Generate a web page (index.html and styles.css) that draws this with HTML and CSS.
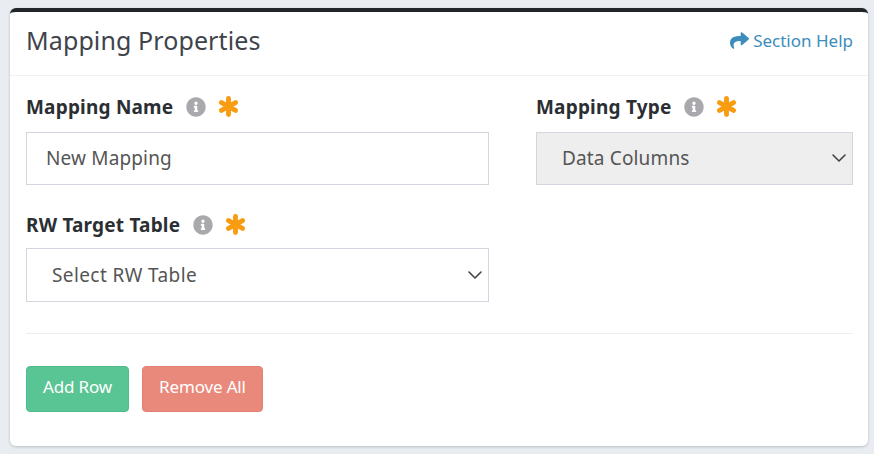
FILE: index.html
```html
<!DOCTYPE html>
<html lang="en">
<head>
<meta charset="utf-8">
<title>Mapping Properties</title>
<link rel="stylesheet" href="styles.css">
</head>
<body>
<section class="card">
  <header class="card-header">
    <h2 class="card-title">Mapping Properties</h2>
    <a class="help-link" href="#">
      <svg class="share-icon" viewBox="0 0 512 512"><path fill="currentColor" d="M503.7 189.8 327.7 37.9C312.3 24.5 288 35.3 288 56v80.100C127.400 137.900 0 170.100 0 322.300c0 61.400 39.600 122.300 83.300 154.100 13.700 9.900 33.100-2.500 28.100-18.600C66.100 312.800 132.900 274.300 288 272.100V360c0 20.700 24.300 31.500 39.700 18.200l176-152c11.100-9.600 11.100-26.800 0-36.400z"/></svg>
      <span>Section Help</span>
    </a>
  </header>
  <div class="card-body">
    <div class="form-grid">
      <div class="field">
        <div class="field-label">
          <span class="label-text">Mapping Name</span>
          <svg class="info-icon" viewBox="0 0 512 512"><path fill="currentColor" d="M256 8C119 8 8 119 8 256s111 248 248 248 248-111 248-248S393 8 256 8zm0 110c23.200 0 42 18.800 42 42s-18.800 42-42 42-42-18.800-42-42 18.800-42 42-42zm56 254c0 6.600-5.400 12-12 12h-88c-6.600 0-12-5.400-12-12v-24c0-6.600 5.400-12 12-12h12v-64h-12c-6.600 0-12-5.400-12-12v-24c0-6.600 5.400-12 12-12h64c6.600 0 12 5.400 12 12v100h12c6.600 0 12 5.400 12 12v24z"/></svg>
          <svg class="req-icon" viewBox="0 0 18 18"><path fill="none" stroke="currentColor" stroke-width="4.2" stroke-linecap="round" d="M9 2.200v13.600M3 5.600l12 6.800M15 5.600L3 12.400"/></svg>
        </div>
        <input class="control text-control" type="text" value="New Mapping">
      </div>
      <div class="field">
        <div class="field-label">
          <span class="label-text">Mapping Type</span>
          <svg class="info-icon" viewBox="0 0 512 512"><path fill="currentColor" d="M256 8C119 8 8 119 8 256s111 248 248 248 248-111 248-248S393 8 256 8zm0 110c23.200 0 42 18.800 42 42s-18.800 42-42 42-42-18.800-42-42 18.800-42 42-42zm56 254c0 6.600-5.400 12-12 12h-88c-6.600 0-12-5.400-12-12v-24c0-6.600 5.400-12 12-12h12v-64h-12c-6.600 0-12-5.400-12-12v-24c0-6.600 5.400-12 12-12h64c6.600 0 12 5.400 12 12v100h12c6.600 0 12 5.400 12 12v24z"/></svg>
          <svg class="req-icon" viewBox="0 0 18 18"><path fill="none" stroke="currentColor" stroke-width="4.2" stroke-linecap="round" d="M9 2.200v13.600M3 5.600l12 6.800M15 5.600L3 12.400"/></svg>
        </div>
        <div class="control select-control is-disabled">
          <span>Data Columns</span>
          <svg class="chevron" viewBox="0 0 16 16"><path fill="none" stroke="currentColor" stroke-width="1.6" stroke-linecap="round" stroke-linejoin="round" d="M2 5l6 6 6-6"/></svg>
        </div>
      </div>
      <div class="field">
        <div class="field-label tight">
          <span class="label-text">RW Target Table</span>
          <svg class="info-icon" viewBox="0 0 512 512"><path fill="currentColor" d="M256 8C119 8 8 119 8 256s111 248 248 248 248-111 248-248S393 8 256 8zm0 110c23.200 0 42 18.800 42 42s-18.800 42-42 42-42-18.800-42-42 18.800-42 42-42zm56 254c0 6.600-5.400 12-12 12h-88c-6.600 0-12-5.400-12-12v-24c0-6.600 5.400-12 12-12h12v-64h-12c-6.600 0-12-5.400-12-12v-24c0-6.600 5.400-12 12-12h64c6.600 0 12 5.400 12 12v100h12c6.600 0 12 5.400 12 12v24z"/></svg>
          <svg class="req-icon" viewBox="0 0 18 18"><path fill="none" stroke="currentColor" stroke-width="4.2" stroke-linecap="round" d="M9 2.200v13.600M3 5.600l12 6.800M15 5.600L3 12.400"/></svg>
        </div>
        <div class="control select-control tall">
          <span>Select RW Table</span>
          <svg class="chevron" viewBox="0 0 16 16"><path fill="none" stroke="currentColor" stroke-width="1.6" stroke-linecap="round" stroke-linejoin="round" d="M2 5l6 6 6-6"/></svg>
        </div>
      </div>
    </div>
    <hr class="divider">
    <div class="actions">
      <button class="btn btn-add" type="button">Add Row</button>
      <button class="btn btn-remove" type="button">Remove All</button>
    </div>
  </div>
</section>
</body>
</html>
```
FILE: styles.css
```css
* { box-sizing: border-box; }
html, body { height: 100%; }
body {
  margin: 0;
  padding: 8px 6px 8px 10px;
  background: #e9ecf1;
  font-family: "Noto Sans", "Open Sans", sans-serif;
  color: #444;
  overflow: hidden;
}
.card {
  height: 438px;
  background: #fff;
  border-top: 4px solid #212529;
  border-radius: 6px;
  box-shadow: 0 1px 3px rgba(0, 0, 0, .2);
}
.card-header {
  height: 64px;
  padding: 0 15px 6px 16px;
  display: flex;
  align-items: center;
  justify-content: space-between;
  border-bottom: 1px solid #eef0f3;
}
.card-title {
  margin: 0 0 2px;
  font-size: 25px;
  font-weight: 400;
  letter-spacing: .1px;
  color: #3f444b;
}
.help-link {
  display: flex;
  align-items: center;
  gap: 4px;
  font-size: 17px;
  color: #3c8dbc;
  text-decoration: none;
}
.share-icon { width: 19px; height: 19px; }
.card-body { padding: 16px 15px 0 16px; }
.form-grid {
  display: grid;
  grid-template-columns: 463px 317px;
  column-gap: 47px;
  row-gap: 25px;
  align-items: start;
}
.field-label {
  height: 26px;
  margin-bottom: 14px;
  padding-top: 3px;
  display: flex;
  align-items: center;
}
.field-label.tight { margin-bottom: 12px; }
.label-text {
  font-size: 19px;
  font-weight: 700;
  letter-spacing: .2px;
  color: #2b2f33;
}
.info-icon { width: 20px; height: 20px; margin-left: 13px; color: #a9a9ad; }
.req-icon { width: 21px; height: 21px; margin-left: 12px; color: #f89c12; }
.control {
  width: 100%;
  height: 53px;
  border: 1px solid #d2d6de;
  background: #fff;
  font-family: inherit;
  font-size: 19px;
  letter-spacing: .15px;
  color: #555;
  display: flex;
  align-items: center;
}
.text-control { padding: 0 19px 1px; outline: 0; }
.select-control { padding: 0 5px 1px 25px; justify-content: space-between; }
.select-control.tall { height: 54px; letter-spacing: .4px; }
.is-disabled { background: #eee; }
.chevron { width: 16px; height: 16px; color: #444; }
.divider {
  margin: 31px 0 32px;
  border: 0;
  border-top: 1px solid #eceef1;
}
.actions { display: flex; gap: 13px; }
.btn {
  height: 46px;
  padding: 0 16px 5px;
  border: 1px solid transparent;
  border-radius: 4px;
  font-family: inherit;
  font-size: 17px;
  letter-spacing: -.15px;
  color: #fff;
}
.btn-add { background: #5ac594; border-color: #52bb8b; }
.btn-remove { background: #e9897b; border-color: #e28173; }
```
